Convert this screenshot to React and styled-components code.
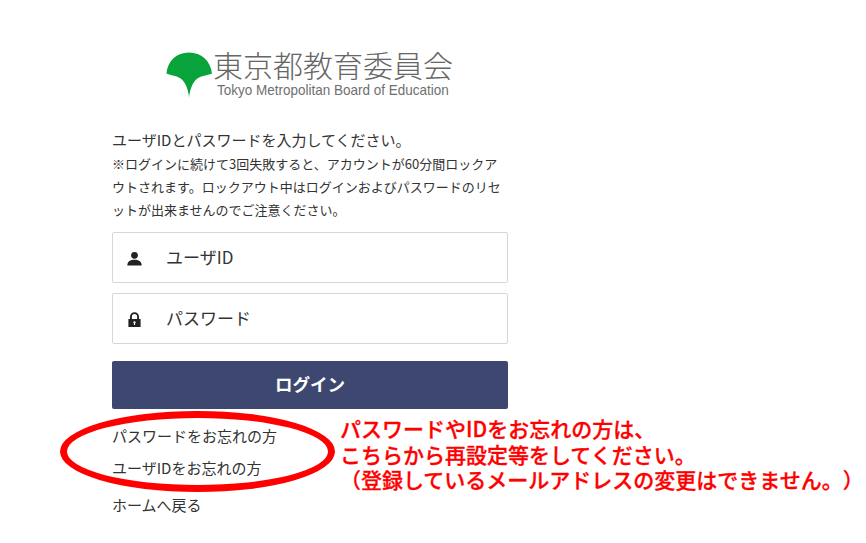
import React from 'react';
import styled, { createGlobalStyle } from 'styled-components';

const GlobalStyle = createGlobalStyle`
  html, body {
    margin: 0;
    padding: 0;
    background: #fff;
  }
  body {
    font-family: "Noto Sans CJK JP", "Noto Sans", sans-serif;
    color: #333;
    text-spacing-trim: space-all;
  }
`;

const App = () => {
    return (
        <Page>
            <GlobalStyle/>
            <Column>
                <Logo>
                    <Ginkgo viewBox="0 0 48 48">
                        <path d="M23.5 47.5 C22.8 39 20 32 15 28 C10 25 3.5 24.5 0.5 23 C1.5 10 11 1.5 23.5 1.5 C36 1.5 45.5 10 47 23 C43.5 24.5 37 25 32 28 C27 32 24.5 39 23.5 47.5 Z" fill="#08a33a"/>
                    </Ginkgo>
                    <LogoText>
                        <LogoTitle>東京都教育委員会</LogoTitle>
                        <LogoSub>Tokyo Metropolitan Board of Education</LogoSub>
                    </LogoText>
                </Logo>
                <Lead>ユーザIDとパスワードを入力してください。</Lead>
                <Note>
                    ※ログインに続けて3回失敗すると、アカウントが60分間ロックア<br/>
                    ウトされます。ロックアウト中はログインおよびパスワードのリセ<br/>
                    ットが出来ませんのでご注意ください。
                </Note>
                <Fields>
                    <Field>
                        <FieldIcon viewBox="0 0 16 16">
                            <circle cx="8" cy="4.6" r="3.6" fill="#222"/>
                            <path d="M0.3 15.5 C0.3 10.8 4 9.2 8 9.2 C12 9.2 15.7 10.8 15.7 15.5 Z" fill="#222"/>
                        </FieldIcon>
                        <FieldLabel>ユーザID</FieldLabel>
                    </Field>
                    <Field>
                        <FieldIcon viewBox="0 0 16 16">
                            <path d="M4.2 8 V5 a3.8 3.8 0 0 1 7.6 0 V8" fill="none" stroke="#222" strokeWidth="2"/>
                            <path fillRule="evenodd" d="M1.5 7.5 H14.5 V16 H1.5 Z M8 9.8 a1.3 1.3 0 0 0 -.6 2.4 V13.8 H8.6 V12.2 A1.3 1.3 0 0 0 8 9.8 Z" fill="#222"/>
                        </FieldIcon>
                        <FieldLabel>パスワード</FieldLabel>
                    </Field>
                </Fields>
                <LoginButton>ログイン</LoginButton>
                <Links>
                    <LinkItem>パスワードをお忘れの方</LinkItem>
                    <LinkItem>ユーザIDをお忘れの方</LinkItem>
                    <BackLink>ホームへ戻る</BackLink>
                </Links>
            </Column>
            <Ellipse/>
            <Callout>
                <p>パスワードやIDをお忘れの方は、</p>
                <p>こちらから再設定等をしてください。</p>
                <p>（登録しているメールアドレスの変更はできません。）</p>
            </Callout>
        </Page>
    )
}

const Page = styled.div`
  position: relative;
  width: 866px;
  height: 543px;
  overflow: hidden;
  padding-left: 112px;
  box-sizing: border-box;
`;

const Column = styled.div`
  width: 396px;
  display: flex;
  flex-direction: column;
`;

const Logo = styled.div`
  display: flex;
  align-items: flex-start;
  margin: 51px 0 0 54px;
  height: 78px;
`;

const Ginkgo = styled.svg`
  width: 47px;
  height: 47px;
  flex: none;
`;

const LogoText = styled.div`
  display: flex;
  flex-direction: column;
  margin-top: -2px;
`;

const LogoTitle = styled.div`
  font-size: 30px;
  line-height: 30px;
  font-weight: 300;
  color: #666;
  white-space: nowrap;
`;

const LogoSub = styled.div`
  font-family: "Liberation Sans", sans-serif;
  font-size: 14.5px;
  line-height: 16px;
  margin: 3px 0 0 4px;
  color: #6f6f6f;
  white-space: nowrap;
  transform: scaleX(0.93);
  transform-origin: left center;
`;

const Lead = styled.div`
  font-size: 15px;
  line-height: 22px;
`;

const Note = styled.div`
  font-size: 13px;
  line-height: 23px;
  margin-top: 1px;
  white-space: nowrap;
`;

const Fields = styled.div`
  display: flex;
  flex-direction: column;
  gap: 10px;
  margin-top: 11px;
`;

const Field = styled.div`
  display: flex;
  align-items: center;
  height: 51px;
  box-sizing: border-box;
  border: 1px solid #d6d6d6;
  border-radius: 2px;
  padding-left: 14px;
`;

const FieldIcon = styled.svg`
  width: 15px;
  height: 15px;
  flex: none;
  margin-top: 1px;
`;

const FieldLabel = styled.span`
  font-size: 17px;
  margin-left: 24px;
  padding-bottom: 2px;
  color: #333;
`;

const LoginButton = styled.div`
  height: 48px;
  margin-top: 17px;
  border-radius: 2px;
  background: #3d476f;
  color: #fff;
  font-size: 17.5px;
  font-weight: 700;
  display: flex;
  align-items: center;
  justify-content: center;
  padding-bottom: 4px;
  box-sizing: border-box;
`;

const Links = styled.div`
  display: flex;
  flex-direction: column;
  align-items: flex-start;
  margin-top: 16px;
`;

const LinkItem = styled.div`
  font-size: 15px;
  line-height: 22px;
  margin-bottom: 10px;
`;

const BackLink = styled(LinkItem)`
  margin: 5px 0 0;
`;

const Ellipse = styled.div`
  position: absolute;
  left: 60px;
  top: 411px;
  width: 275px;
  height: 81px;
  box-sizing: border-box;
  border: 7px solid #fe0000;
  border-radius: 50%;
`;

const Callout = styled.div`
  position: absolute;
  left: 340px;
  top: 416px;
  color: #fe0000;
  font-size: 21px;
  font-weight: 500;
  -webkit-text-stroke: 0.3px #fe0000;
  line-height: 25.5px;
  white-space: nowrap;
  p {
    margin: 0;
  }
`;

export default App;
